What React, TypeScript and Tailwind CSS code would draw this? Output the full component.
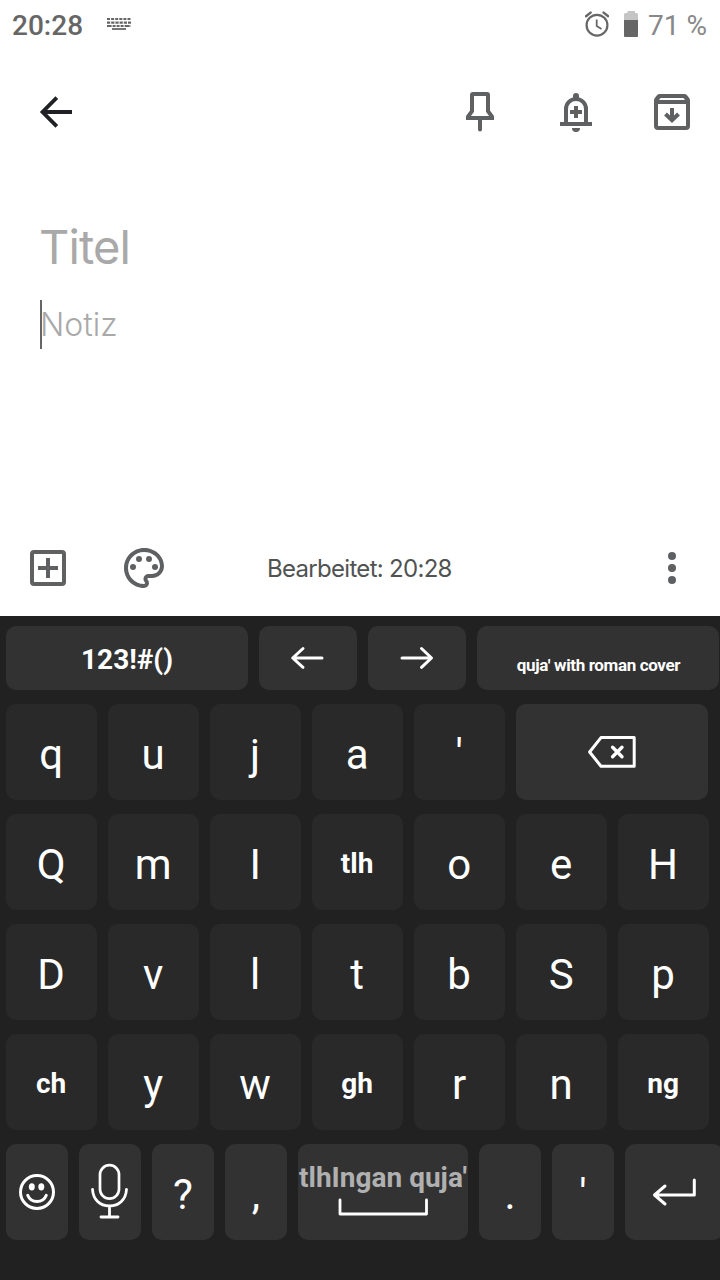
import React from "react";

type IconProps = { box: string; className: string; children: React.ReactNode };

function Icon({ box, className, children }: IconProps) {
  return (
    <svg viewBox={box} className={`shrink-0 ${className}`} fill="none" aria-hidden="true">
      {children}
    </svg>
  );
}

function StatusBar() {
  return (
    <header className="flex h-12 items-center justify-between pl-3 pr-[13px] text-[28px] leading-none text-[#666]">
      <div className="flex items-center gap-6">
        <span className="pt-[3px] font-medium">20:28</span>
        <Icon box="107 12 24 24" className="size-6">
          <g stroke="#666" strokeWidth="2.2">
            <path d="M107 19H131" strokeDasharray="3 1.1" />
            <path d="M107 22.6H131" strokeDasharray="3.2 1" />
            <path d="M107 26H131" strokeDasharray="4.6 1 3 1 3 1 3 1 5 1" />
            <path d="M112 29H126" strokeWidth="1.8" />
          </g>
        </Icon>
      </div>
      <div className="flex items-center">
        <Icon box="585 11 24 26" className="h-[26px] w-6">
          <circle cx="597" cy="25.2" r="10.4" stroke="#666" strokeWidth="2.2" />
          <path d="M586 16.2L590.6 12.6M608.2 16.2L603.6 12.6" stroke="#666" strokeWidth="2.4" strokeLinecap="round" />
          <path d="M596.7 19.5V26L601.5 29" stroke="#666" strokeWidth="1.8" />
        </Icon>
        <Icon box="624 11 14 26" className="ml-[15px] h-[26px] w-3.5">
          <path d="M624 20V14.5Q624 13 625.5 13H627.5V11H635V13H636.5Q638 13 638 14.5V20Z" fill="#c5c5c5" />
          <path d="M624 20H638V36Q638 37 637 37H625Q624 37 624 36Z" fill="#666" />
        </Icon>
        <span className="ml-[10px] pt-[3px] text-[#888]">71 %</span>
      </div>
    </header>
  );
}

function Toolbar() {
  return (
    <nav className="flex h-32 items-center justify-between pl-8 pr-6">
      <Icon box="32 88 48 48" className="size-12">
        <path d="M72 112H43M56.8 97.7L42.5 112L56.8 126.3" stroke="#202124" strokeWidth="3.8" />
      </Icon>
      <div className="flex gap-12 text-[#5f6062]">
        <Icon box="456 88 48 48" className="size-12">
          <path
            fill="currentColor"
            fillRule="evenodd"
            d="M473 92H487Q490 92 490 95V110.5L494 116V120H466V116L470 110.5V95Q470 92 473 92ZM474 96V111.7L471 116H489L486 111.7V96Z"
          />
          <path d="M480 119V129.4" stroke="currentColor" strokeWidth="4" strokeLinecap="round" />
        </Icon>
        <Icon box="552 88 48 48" className="size-12">
          <path d="M566 123V109A10 10 0 0 1 586 109V123" stroke="currentColor" strokeWidth="4" />
          <path d="M560 124H592M576 106V118M570 112H582" stroke="currentColor" strokeWidth="4" />
          <path d="M573 99V96A3 3 0 0 1 579 96V99ZM572 128H580A4 4 0 0 1 572 128Z" fill="currentColor" />
        </Icon>
        <Icon box="648 88 48 48" className="size-12">
          <path
            fill="currentColor"
            fillRule="evenodd"
            d="M659.5 94H684.5Q686 94 687 95.2L689.2 98Q690 99 690 100.5V126Q690 130 686 130H658Q654 130 654 126V100.5Q654 99 654.8 98L657 95.2Q658 94 659.5 94ZM660.5 98L659 100H685L683.5 98ZM658 104V126H686V104Z"
          />
          <path d="M672 108V120M665.5 114L672 120.3L678.5 114" stroke="currentColor" strokeWidth="4" />
        </Icon>
      </div>
    </nav>
  );
}

function BottomBar() {
  return (
    <footer className="flex h-24 items-center justify-between px-6 text-[#5f6062]">
      <div className="flex w-[243px] gap-12">
        <Icon box="24 544 48 48" className="size-12">
          <rect x="32" y="552" width="32" height="32" rx="2" stroke="currentColor" strokeWidth="4" />
          <path d="M48 558V578M38 568H58" stroke="currentColor" strokeWidth="4" />
        </Icon>
        <Icon box="0 0 24 24" className="size-12">
          <g fill="currentColor">
            <path d="M12 22C6.49 22 2 17.51 2 12S6.49 2 12 2s10 4.04 10 9c0 3.31-2.69 6-6 6h-1.77c-.28 0-.5.22-.5.5 0 .12.05.23.13.33.41.47.64 1.06.64 1.67A2.5 2.5 0 0 1 12 22zm0-18c-4.41 0-8 3.59-8 8s3.59 8 8 8c.28 0 .5-.22.5-.5a.54.54 0 0 0-.14-.35c-.41-.46-.63-1.05-.63-1.65a2.5 2.5 0 0 1 2.5-2.5H16c2.21 0 4-1.79 4-4 0-3.86-3.59-7-8-7z" />
            <circle cx="6.5" cy="11.5" r="1.5" />
            <circle cx="9.5" cy="7.5" r="1.5" />
            <circle cx="14.5" cy="7.5" r="1.5" />
            <circle cx="17.5" cy="11.5" r="1.5" />
          </g>
        </Icon>
      </div>
      <span className="grow whitespace-nowrap pt-0.5 font-[Inter] text-[24px] leading-none tracking-[-0.7px] text-[#505352]">
        Bearbeitet: 20:28
      </span>
      <Icon box="648 544 48 48" className="size-12">
        <g fill="currentColor">
          <circle cx="672" cy="556" r="4" />
          <circle cx="672" cy="568" r="4" />
          <circle cx="672" cy="580" r="4" />
        </g>
      </Icon>
    </footer>
  );
}

function Key({ className, children }: { className: string; children: React.ReactNode }) {
  return (
    <button className={`flex shrink-0 items-center justify-center rounded-[10px] whitespace-nowrap leading-none ${className}`}>
      {children}
    </button>
  );
}

function LetterKey({ label }: { label: string }) {
  const multi = label.length > 1;
  return (
    <Key className={`h-24 w-[91px] bg-[#292929] pr-[0.8px] ${multi ? "pt-1 text-[28px] font-bold" : "pt-1.5 text-[42px]"}`}>
      {label}
    </Key>
  );
}

function SmallKey({ label }: { label: string }) {
  return <Key className="h-24 w-[62px] bg-[#323232] pt-1.5 text-[42px]">{label}</Key>;
}

const rows = [
  ["Q", "m", "I", "tlh", "o", "e", "H"],
  ["D", "v", "l", "t", "b", "S", "p"],
  ["ch", "y", "w", "gh", "r", "n", "ng"],
];

function Keyboard() {
  return (
    <section className="flex h-[664px] flex-col gap-3.5 overflow-hidden bg-[#212121] pl-1.5 pt-2.5 text-white">
      <div className="flex gap-[11px]">
        <Key className="h-16 w-[242px] bg-[#323232] pt-1 text-[28px] font-bold">123!#()</Key>
        <Key className="h-16 w-[98px] bg-[#323232]">
          <Icon box="290 642 36 32" className="h-8 w-9">
            <path d="M322 658H293M303 648.5L292.7 658L303 667.3" stroke="white" strokeWidth="3" strokeLinecap="round" strokeLinejoin="round" />
          </Icon>
        </Key>
        <Key className="h-16 w-[98px] bg-[#323232]">
          <Icon box="399 642 36 32" className="h-8 w-9">
            <path d="M402 658H431M421.5 648.5L431.5 658L421.5 667.3" stroke="white" strokeWidth="3" strokeLinecap="round" strokeLinejoin="round" />
          </Icon>
        </Key>
        <Key className="h-16 w-[242px] bg-[#323232] pl-px pt-3.5 text-[17px] font-bold tracking-[-0.36px]">
          quja' with roman cover
        </Key>
      </div>
      <div className="flex gap-[11px]">
        {["q", "u", "j", "a", "'"].map((k) => (
          <LetterKey key={k} label={k} />
        ))}
        <Key className="h-24 w-48 bg-[#323232]">
          <Icon box="587 734 50 36" className="h-9 w-[50px]">
            <path d="M601 737.6H634.2V766.2H601L589.6 752Z" stroke="white" strokeWidth="3" strokeLinejoin="round" />
            <path d="M612.6 747.3L622 756.7M622 747.3L612.6 756.7" stroke="white" strokeWidth="3.4" strokeLinecap="round" />
          </Icon>
        </Key>
      </div>
      {rows.map((row, i) => (
        <div key={i} className="flex gap-[11px]">
          {row.map((k) => (
            <LetterKey key={k} label={k} />
          ))}
        </div>
      ))}
      <div className="flex gap-[11px]">
        <Key className="h-24 w-[62px] bg-[#323232]">
          <Icon box="17 1172 40 40" className="size-10">
            <circle cx="37" cy="1192" r="16.5" stroke="white" strokeWidth="3" />
            <ellipse cx="31.8" cy="1186.8" rx="3" ry="3.6" fill="white" />
            <ellipse cx="41.3" cy="1186.8" rx="3" ry="3.6" fill="white" />
            <path d="M27.7 1195.3C31 1203.7 43 1203.7 46.3 1195.3" stroke="white" strokeWidth="3" strokeLinecap="round" />
          </Icon>
        </Key>
        <Key className="h-24 w-[62px] bg-[#323232]">
          <Icon box="90 1162 40 60" className="h-[60px] w-10">
            <rect x="100" y="1165.2" width="19" height="33.5" rx="9.5" stroke="white" strokeWidth="2.7" />
            <path
              d="M92.5 1189.3C93 1199.5 100 1206 109.5 1206S126 1199.5 126.5 1189.3M109.5 1206V1217M101 1217H118"
              stroke="white"
              strokeWidth="2.8"
              strokeLinecap="round"
            />
          </Icon>
        </Key>
        <SmallKey label="?" />
        <SmallKey label="," />
        <Key className="h-24 w-[170px] flex-col bg-[#323232] pb-1.5">
          <span className="pt-px text-[28px] font-bold leading-[32px] text-[#b0b0b0]">tlhIngan quja'</span>
          <Icon box="338 1197 90 20" className="mt-[3px] h-5 w-[90px]">
            <path d="M340 1200V1214H426.5V1200" stroke="white" strokeWidth="2.8" strokeLinecap="round" strokeLinejoin="round" />
          </Icon>
        </Key>
        <SmallKey label="." />
        <SmallKey label="'" />
        <Key className="h-24 w-[98px] bg-[#323232]">
          <Icon box="650 1172 48 40" className="h-10 w-12">
            <path d="M694.3 1180V1195H655M665 1186L654.5 1195L665 1204" stroke="white" strokeWidth="3" strokeLinecap="round" strokeLinejoin="round" />
          </Icon>
        </Key>
      </div>
    </section>
  );
}

export default function App() {
  return (
    <div className="flex h-[1280px] w-[720px] flex-col overflow-hidden bg-white font-[Roboto,sans-serif]">
      <StatusBar />
      <Toolbar />
      <main className="flex grow flex-col items-start pl-10 pt-[43px] font-[Inter,sans-serif] text-[#a9a9a9]">
        <h1 className="-ml-px h-14 text-[47px] leading-[56px] tracking-[-0.9px]">Titel</h1>
        <div className="mt-[25px] flex h-[49px] items-center border-l-2 border-[#666] text-[32px] font-light leading-none">
          <span className="-ml-0.5 pt-px">Notiz</span>
        </div>
      </main>
      <BottomBar />
      <Keyboard />
    </div>
  );
}
